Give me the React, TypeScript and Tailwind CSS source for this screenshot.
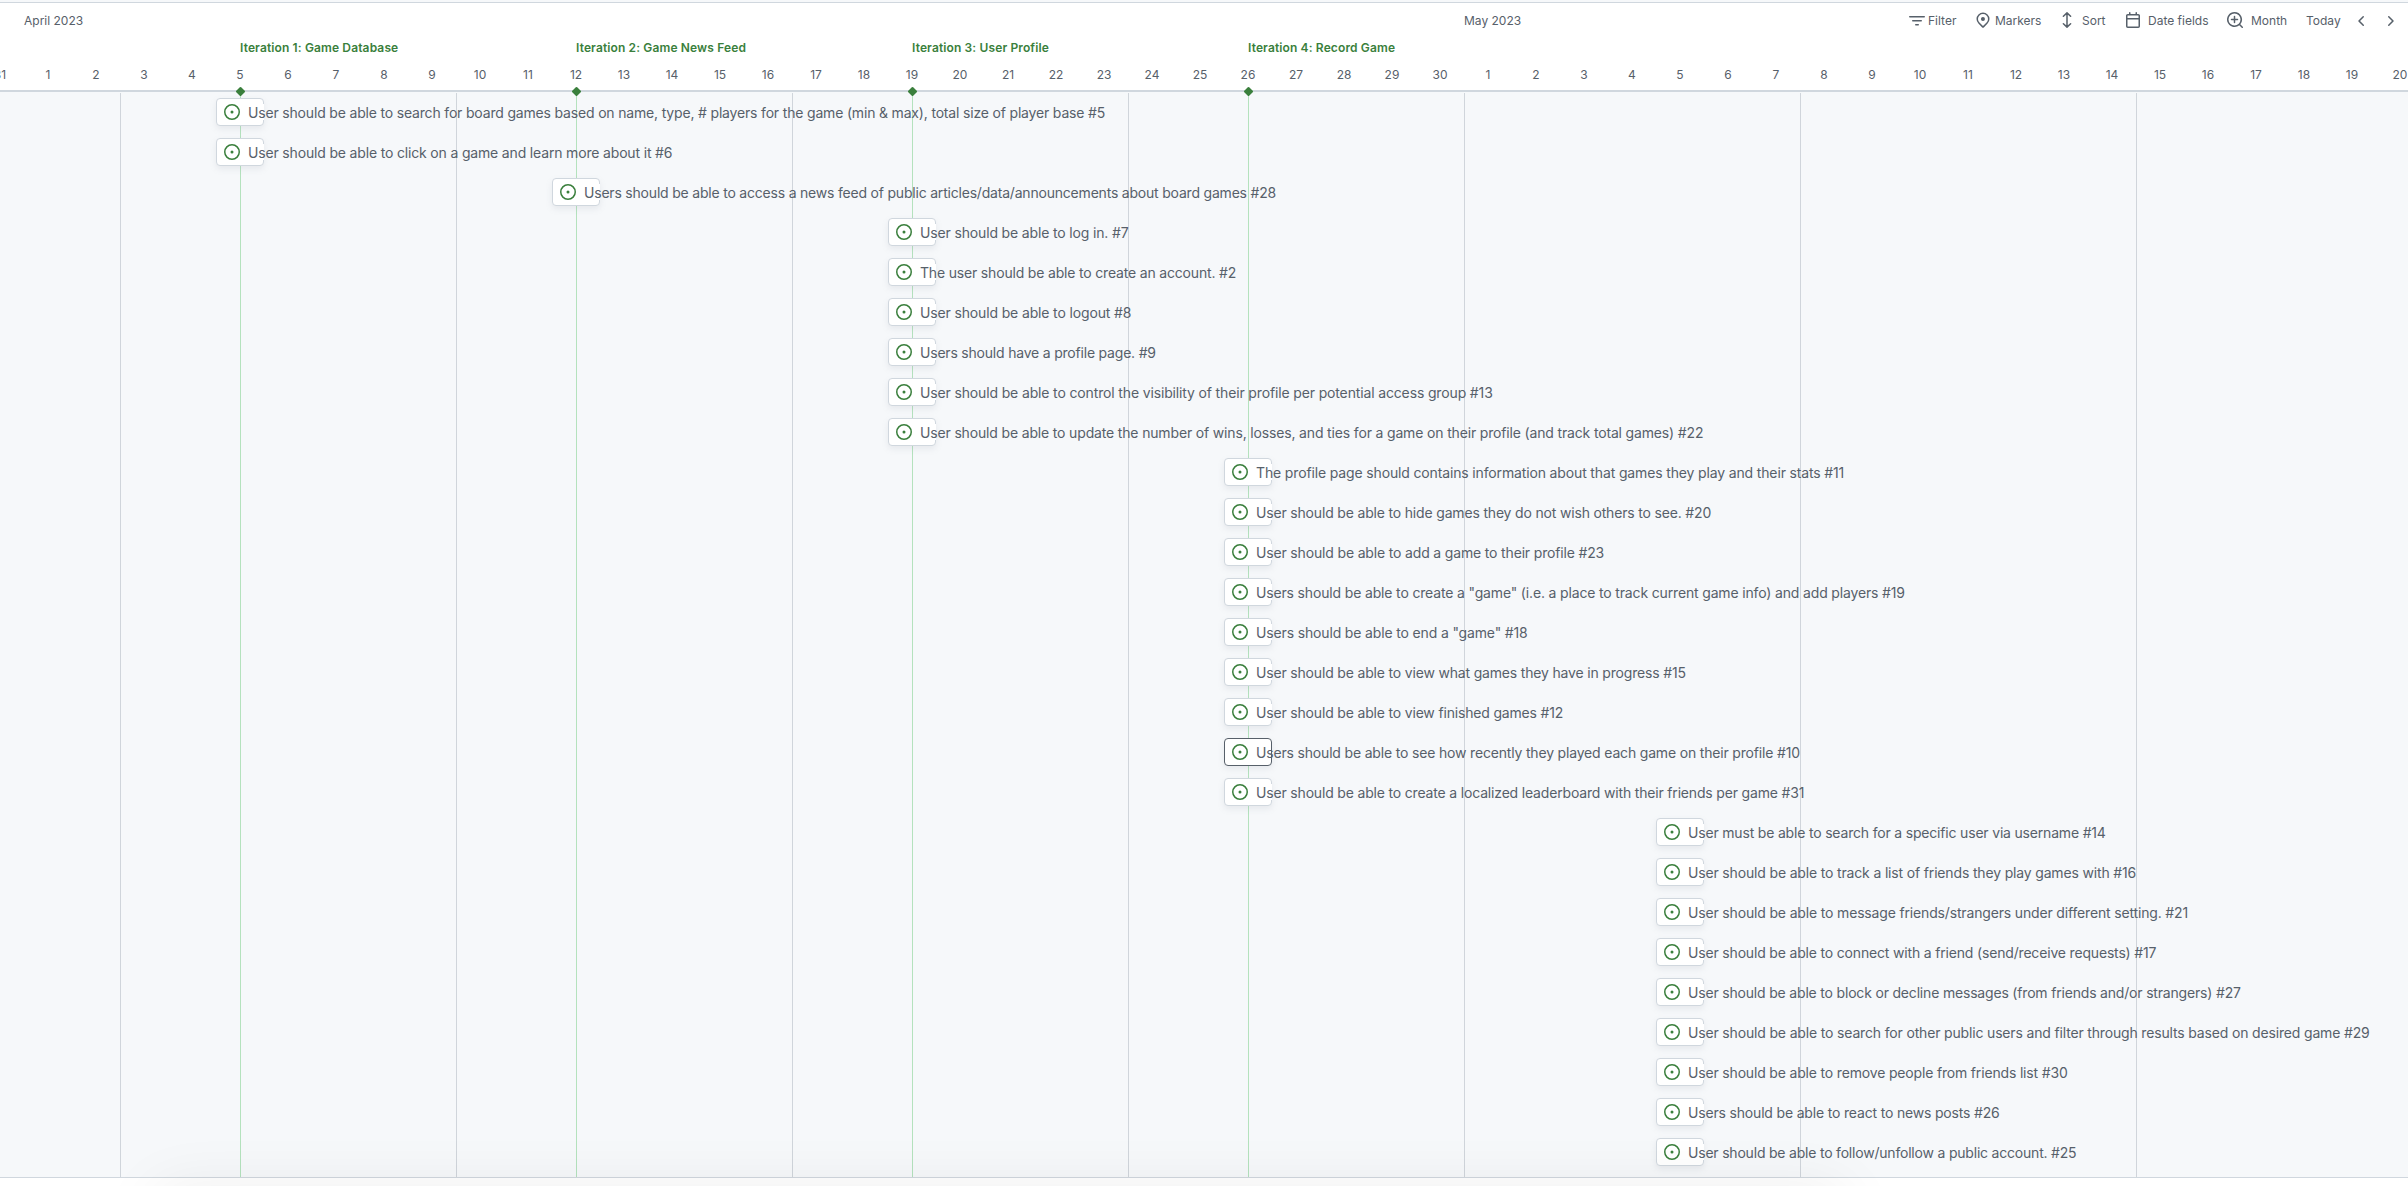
import React from "react";

const DAY = 48;

// `trim` is how many pixels a title is tightened by, spread over its letters.
type Item = { day: number; title: string; id: number; trim: number; focused?: boolean };

const items: Item[] = [
  { day: 5, title: "User should be able to search for board games based on name, type, # players for the game (min & max), total size of player base", id: 5, trim: 7.4 },
  { day: 5, title: "User should be able to click on a game and learn more about it", id: 6, trim: 3.1 },
  { day: 12, title: "Users should be able to access a news feed of public articles/data/announcements about board games", id: 28, trim: 8.4 },
  { day: 19, title: "User should be able to log in.", id: 7, trim: 1.1 },
  { day: 19, title: "The user should be able to create an account.", id: 2, trim: 2.8 },
  { day: 19, title: "User should be able to logout", id: 8, trim: 0.8 },
  { day: 19, title: "Users should have a profile page.", id: 9, trim: 3 },
  { day: 19, title: "User should be able to control the visibility of their profile per potential access group", id: 13, trim: 2.3 },
  { day: 19, title: "User should be able to update the number of wins, losses, and ties for a game on their profile (and track total games)", id: 22, trim: 4.9 },
  { day: 26, title: "The profile page should contains information about that games they play and their stats", id: 11, trim: 2.3 },
  { day: 26, title: "User should be able to hide games they do not wish others to see.", id: 20, trim: 3.8 },
  { day: 26, title: "User should be able to add a game to their profile", id: 23, trim: 2.3 },
  { day: 26, title: 'Users should be able to create a "game" (i.e. a place to track current game info) and add players', id: 19, trim: 3.8 },
  { day: 26, title: 'Users should be able to end a "game"', id: 18, trim: 1.2 },
  { day: 26, title: "User should be able to view what games they have in progress", id: 15, trim: 3.6 },
  { day: 26, title: "User should be able to view finished games", id: 12, trim: 2.6 },
  { day: 26, title: "Users should be able to see how recently they played each game on their profile", id: 10, trim: 4.6, focused: true },
  { day: 26, title: "User should be able to create a localized leaderboard with their friends per game", id: 31, trim: 4.6 },
  { day: 35, title: "User must be able to search for a specific user via username", id: 14, trim: 4.1 },
  { day: 35, title: "User should be able to track a list of friends they play games with", id: 16, trim: 3 },
  { day: 35, title: "User should be able to message friends/strangers under different setting.", id: 21, trim: 3.3 },
  { day: 35, title: "User should be able to connect with a friend (send/receive requests)", id: 17, trim: 3.9 },
  { day: 35, title: "User should be able to block or decline messages (from friends and/or strangers)", id: 27, trim: 5.4 },
  { day: 35, title: "User should be able to search for other public users and filter through results based on desired game", id: 29, trim: 4.6 },
  { day: 35, title: "User should be able to remove people from friends list", id: 30, trim: 3 },
  { day: 35, title: "Users should be able to react to news posts", id: 26, trim: 2.6 },
  { day: 35, title: "User should be able to follow/unfollow a public account.", id: 25, trim: 5 },
];

const iterations = [
  { day: 5, name: "Iteration 1: Game Database" },
  { day: 12, name: "Iteration 2: Game News Feed" },
  { day: 19, name: "Iteration 3: User Profile" },
  { day: 26, name: "Iteration 4: Record Game" },
];

const days = Array.from({ length: 51 }, (_, i) => (i === 0 ? 31 : i <= 30 ? i : i - 30));
const weekLines = [120, 456, 792, 1128, 1464, 1800, 2136];

function Icon({ d, className = "" }: { d: string; className?: string }) {
  return (
    <svg viewBox="0 0 16 16" fill="currentColor" className={`h-4 w-4 shrink-0 ${className}`}>
      <path fillRule="evenodd" d={d} />
    </svg>
  );
}

function SortIcon() {
  return (
    <svg viewBox="0 0 16 16" fill="none" stroke="currentColor" strokeWidth="1.5" strokeLinecap="round" strokeLinejoin="round" className="-mt-0.5 h-4 w-4 shrink-0">
      <path d="M8 1v14M4.4 4.2 8 .9l3.6 3.3M4.4 11.8 8 15.1l3.6-3.3" />
    </svg>
  );
}

const FILTER = "M.75 3a.75.75 0 0 0 0 1.5h14.5a.75.75 0 0 0 0-1.5H.75ZM3 7.75A.75.75 0 0 1 3.75 7h8.5a.75.75 0 0 1 0 1.5h-8.5A.75.75 0 0 1 3 7.75Zm3 4a.75.75 0 0 1 .75-.75h2.5a.75.75 0 0 1 0 1.5h-2.5a.75.75 0 0 1-.75-.75Z";
const PIN = "m12.596 11.596-3.535 3.536a1.5 1.5 0 0 1-2.122 0l-3.535-3.536a6.5 6.5 0 1 1 9.192-9.193 6.5 6.5 0 0 1 0 9.193Zm-1.06-8.132v-.001a5 5 0 1 0-7.072 7.072L8 14.07l3.536-3.534a5 5 0 0 0 0-7.072ZM8 9a2 2 0 1 1-.001-3.999A2 2 0 0 1 8 9Z";
const CALENDAR = "M4.75 0a.75.75 0 0 1 .75.75V2h5V.75a.75.75 0 0 1 1.5 0V2h1.25c.966 0 1.75.784 1.75 1.75v10.5A1.75 1.75 0 0 1 13.25 16H2.75A1.75 1.75 0 0 1 1 14.25V3.75C1 2.784 1.784 2 2.75 2H4V.75A.75.75 0 0 1 4.75 0ZM2.5 7.5v6.75c0 .138.112.25.25.25h10.5a.25.25 0 0 0 .25-.25V7.5Zm10.75-4H2.75a.25.25 0 0 0-.25.25V6h11V3.75a.25.25 0 0 0-.25-.25Z";
const ZOOM = "M3.75 7.5a.75.75 0 0 1 .75-.75h2.25V4.5a.75.75 0 0 1 1.5 0v2.25h2.25a.75.75 0 0 1 0 1.5H8.25v2.25a.75.75 0 0 1-1.5 0V8.25H4.5a.75.75 0 0 1-.75-.75ZM7.5 0a7.5 7.5 0 0 1 5.807 12.247l2.473 2.473a.749.749 0 1 1-1.06 1.06l-2.473-2.473A7.5 7.5 0 1 1 7.5 0Zm-6 7.5a6 6 0 1 0 12 0 6 6 0 0 0-12 0Z";
const LEFT = "M9.78 12.78a.75.75 0 0 1-1.06 0L4.47 8.53a.75.75 0 0 1 0-1.06l4.25-4.25a.751.751 0 0 1 1.06 1.06L6.06 8l3.72 3.72a.75.75 0 0 1 0 1.06Z";
const RIGHT = "M6.22 3.22a.75.75 0 0 1 1.06 0l4.25 4.25a.75.75 0 0 1 0 1.06l-4.25 4.25a.751.751 0 0 1-1.06-1.06L9.94 8 6.22 4.28a.75.75 0 0 1 0-1.06Z";
const OPEN = "M8 9.5a1.5 1.5 0 1 0 0-3 1.5 1.5 0 0 0 0 3ZM8 0a8 8 0 1 1 0 16A8 8 0 0 1 8 0ZM1.5 8a6.5 6.5 0 1 0 13 0 6.5 6.5 0 0 0-13 0Z";

function Toolbar() {
  return (
    <div className="flex h-[36px] items-center text-[12px]">
      <div className="ml-auto flex w-[499px] items-center">
        <div className="flex w-[66px] items-center gap-[3px]"><Icon d={FILTER} /><span>Filter</span></div>
        <div className="flex w-[84px] items-center gap-[4px]"><Icon d={PIN} className="-mt-0.5" /><span>Markers</span></div>
        <div className="flex w-[66px] items-center gap-[7px]"><SortIcon /><span>Sort</span></div>
        <div className="flex w-[102px] items-center gap-[7px]"><Icon d={CALENDAR} className="-mt-0.5" /><span>Date fields</span></div>
        <div className="flex w-[79px] items-center gap-[8px]"><Icon d={ZOOM} className="-mt-0.5" /><span>Month</span></div>
        <span className="w-[48px]">Today</span>
        <Icon d={LEFT} />
        <Icon d={RIGHT} className="ml-[12px]" />
      </div>
    </div>
  );
}

function Row({ item }: { item: Item }) {
  const text = `${item.title} #${item.id}`;
  return (
    <div className="flex h-[40px] items-start" style={{ paddingLeft: item.day * DAY - 24 }}>
      <div className={`relative flex h-[28px] w-[48px] shrink-0 items-center rounded-[4px] border bg-white pl-[7px] shadow-[0_3px_6px_rgba(140,149,159,0.15)] ${item.focused ? "border-[#57606a]" : "border-[#d0d7de]"}`}>
        {!item.focused && <span className="absolute -right-px top-[5px] h-[16px] w-px bg-white" />}
        <Icon d={OPEN} className="text-[#3a7f3c]" />
      </div>
      <span
        className="relative -ml-[16px] mt-[5px] whitespace-nowrap text-[14px] leading-[20px]"
        style={{ letterSpacing: `${-0.12 - item.trim / text.length}px` }}
      >
        {text}
      </span>
    </div>
  );
}

export default function App() {
  return (
    <div className="relative flex h-[1186px] w-[2408px] flex-col overflow-hidden bg-white font-[Inter,sans-serif] text-[#57606a]">
      <div className="h-[3px] shrink-0 border-b border-[#d0d7de] bg-[#f6f8fa]" />
      <header className="relative h-[89px] shrink-0 border-b-2 border-[#d0d7de]">
        <Toolbar />
        <span className="absolute left-[24px] top-[10px] text-[12px] leading-[16px]">April 2023</span>
        <span className="absolute left-[1464px] top-[10px] text-[12px] leading-[16px]">May 2023</span>
        {iterations.map((it) => (
          <span key={it.day} className="absolute top-[37px] whitespace-nowrap text-[12px] font-semibold leading-[16px] tracking-[0.13px] text-[#3a7f3c]" style={{ left: it.day * DAY }}>
            {it.name}
          </span>
        ))}
        <div className="-ml-[24px] mt-[28px] flex text-[12px] leading-[16px]">
          {days.map((d, i) => (
            <span key={i} className="w-[48px] shrink-0 text-center">{d}</span>
          ))}
        </div>
      </header>
      <main className="relative h-[1086px] shrink-0 border-b border-[#d0d7de] bg-[#f6f8fa] pt-[6px]">
        {weekLines.map((x) => (
          <div key={x} className="absolute bottom-0 top-px w-px bg-[#d0d5db]" style={{ left: x }} />
        ))}
        {iterations.map((it) => (
          <React.Fragment key={it.day}>
            <div className="absolute bottom-0 top-px w-px bg-[#b4e2bd]" style={{ left: it.day * DAY }} />
            <div className="absolute -top-[4px] h-[7px] w-[7px] rotate-45 rounded-[1px] bg-[#3a7f3c]" style={{ left: it.day * DAY - 3 }} />
          </React.Fragment>
        ))}
        <div className="relative flex flex-col">
          {items.map((item) => (
            <Row key={item.id} item={item} />
          ))}
        </div>
      </main>
      <div className="absolute -bottom-[40px] left-[170px] h-[20px] w-[1660px] rounded-full shadow-[0_0_60px_20px_rgba(0,0,0,0.065)]" />
    </div>
  );
}
